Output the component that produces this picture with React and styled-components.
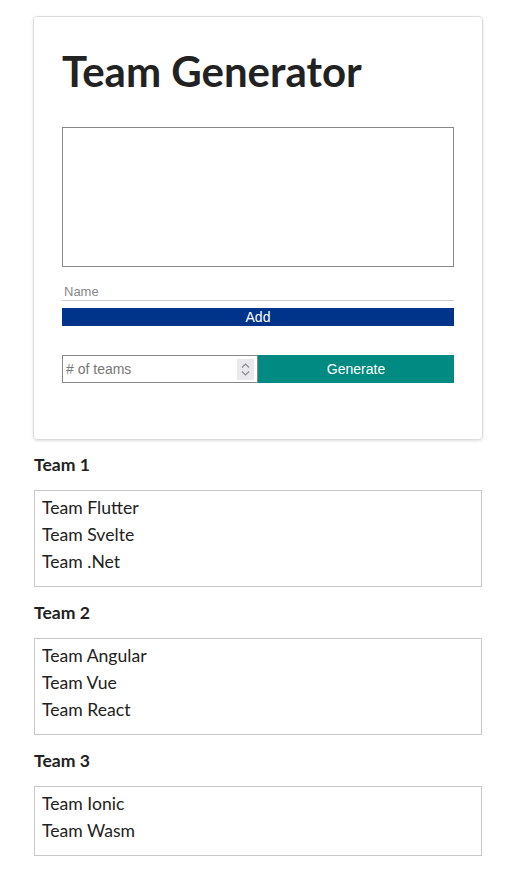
import React from 'react';
import styled, { createGlobalStyle } from 'styled-components';

const GlobalStyle = createGlobalStyle`
  body {
    margin: 0;
    background: #fff;
    font-family: Lato, 'Open Sans', sans-serif;
    color: #222;
  }
`;

const Page = styled.div`
  width: 448px;
  margin: 0 0 0 34px;
  padding: 16px 0 30px;
`;

const Card = styled.div`
  border: 1px solid #dcdcdc;
  border-radius: 4px;
  box-shadow: 0 1px 3px rgba(0, 0, 0, 0.12);
  padding: 28px 28px 56px;
  margin: 0 -1px 0 -1px;
`;

const Title = styled.h1`
  font-size: 42px;
  font-weight: 700;
  line-height: 1.2;
  color: #222;
  margin: 1px 0 31px;
`;

const NameList = styled.textarea`
  display: block;
  box-sizing: border-box;
  width: 100%;
  height: 140px;
  border: 1px solid #888;
  resize: none;
  margin: 0 0 14px;
`;

const NameInput = styled.input`
  display: block;
  box-sizing: border-box;
  width: 100%;
  height: 20px;
  border: none;
  border-bottom: 1px solid #ccc;
  padding: 2px 2px 0;
  font-family: 'Liberation Sans', Arial, sans-serif;
  font-size: 13px;
  outline: none;
  &::placeholder {
    color: #888;
  }
`;

const Button = styled.button`
  display: block;
  border: none;
  color: #fff;
  font-family: 'Liberation Sans', Arial, sans-serif;
  font-size: ${p => p.$size || 13}px;
  background: ${p => p.$bg};
  padding: 0;
  cursor: pointer;
`;

const AddButton = styled(Button)`
  width: 100%;
  height: 18px;
  margin-top: 7px;
`;

const GenerateRow = styled.div`
  display: flex;
  margin-top: 29px;
  height: 28px;
`;

const CountWrap = styled.div`
  position: relative;
  width: 50%;
  height: 100%;
`;

const CountInput = styled.input`
  box-sizing: border-box;
  width: 100%;
  height: 100%;
  border: 1px solid #888;
  padding: 0 3px;
  font-family: 'Liberation Sans', Arial, sans-serif;
  font-size: 14px;
  &::placeholder {
    color: #777;
  }
  &::-webkit-inner-spin-button,
  &::-webkit-outer-spin-button {
    -webkit-appearance: none;
    margin: 0;
  }
`;

const Spinner = styled.div`
  position: absolute;
  right: 4px;
  top: 4px;
  width: 17px;
  height: 21px;
  background: #e9e9ed;
  display: flex;
  flex-direction: column;
  align-items: center;
  justify-content: center;
  gap: 3px;
  pointer-events: none;
`;

const GenerateButton = styled(Button)`
  width: 50%;
  height: 100%;
`;

const TeamSection = styled.section`
  margin-top: 15px;
  & + & {
    margin-top: 16px;
  }
`;

const TeamTitle = styled.h3`
  font-size: 17.6px;
  font-weight: 700;
  margin: 0 0 15px;
  line-height: 20px;
`;

const TeamBox = styled.div`
  border: 1px solid #c8c8c8;
  padding: 3px 7px 11px;
`;

const Member = styled.div`
  font-size: 17.6px;
  line-height: 27px;
  color: #222;
`;

const teams = [
  ['Team Flutter', 'Team Svelte', 'Team .Net'],
  ['Team Angular', 'Team Vue', 'Team React'],
  ['Team Ionic', 'Team Wasm'],
];

const Chevron = ({ up }) => (
  <svg width="9" height="5" viewBox="0 0 9 5">
    <path
      d={up ? 'M1 4.5 L4.5 1 L8 4.5' : 'M1 0.5 L4.5 4 L8 0.5'}
      fill="none"
      stroke="#8a8a8a"
      strokeWidth="1.2"
    />
  </svg>
);

const App = () => {
  return (
    <Page>
      <GlobalStyle />
      <Card>
        <Title>Team Generator</Title>
        <NameList />
        <NameInput placeholder="Name" />
        <AddButton $bg="#00338a" $size={14}>Add</AddButton>
        <GenerateRow>
          <CountWrap>
            <CountInput type="number" placeholder="# of teams" />
            <Spinner>
              <Chevron up />
              <Chevron />
            </Spinner>
          </CountWrap>
          <GenerateButton $bg="#008a82" $size={14}>Generate</GenerateButton>
        </GenerateRow>
      </Card>
      {teams.map((team, i) => (
        <TeamSection key={i}>
          <TeamTitle>Team {i + 1}</TeamTitle>
          <TeamBox>
            {team.map(m => <Member key={m}>{m}</Member>)}
          </TeamBox>
        </TeamSection>
      ))}
    </Page>
  );
};

export default App;
